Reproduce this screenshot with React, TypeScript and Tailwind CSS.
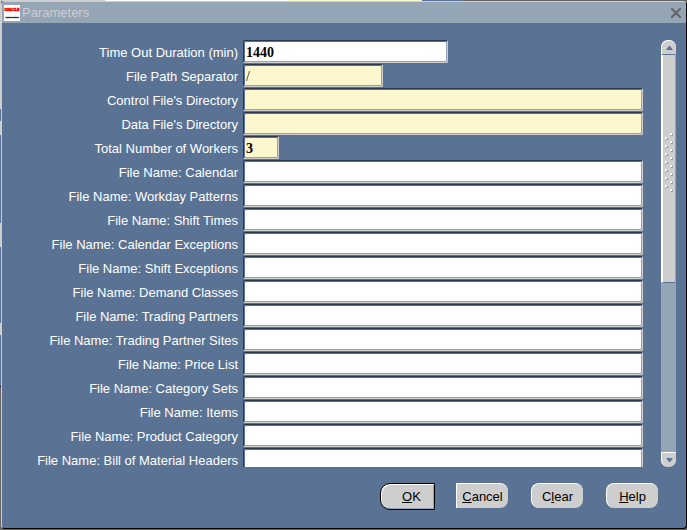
const fields = [
  { label: "Time Out Duration (min)", value: "1440", width: "w-[205px]", bg: "bg-white", text: "font-bold" },
  { label: "File Path Separator", value: "/", width: "w-[140px]", bg: "bg-[#fff7ce]", text: "font-normal" },
  { label: "Control File's Directory", value: "", width: "w-full", bg: "bg-[#fff7ce]", text: "font-bold" },
  { label: "Data File's Directory", value: "", width: "w-full", bg: "bg-[#fff7ce]", text: "font-bold" },
  { label: "Total Number of Workers", value: "3", width: "w-9", bg: "bg-[#fff7ce]", text: "font-bold" },
  ...[
    "Calendar",
    "Workday Patterns",
    "Shift Times",
    "Calendar Exceptions",
    "Shift Exceptions",
    "Demand Classes",
    "Trading Partners",
    "Trading Partner Sites",
    "Price List",
    "Category Sets",
    "Items",
    "Product Category",
    "Bill of Material Headers",
  ].map((name) => ({
    label: `File Name: ${name}`,
    value: "",
    width: "w-full",
    bg: "bg-white",
    text: "font-bold",
  })),
];

// Slivers of the form behind the dialog, along its left edge
const leftEdge = [
  "h-[108px] bg-[#cecece]",
  "h-3 bg-[#5a7394]",
  "h-[14px] bg-[#cecece]",
  "h-[88px] bg-[#5a7394]",
  "h-6 bg-[#cecece]",
  "h-[76px] bg-[#5a7394]",
  "h-3 bg-[#cecece]",
  "h-[51px] bg-[#5a7394]",
  "h-px bg-black",
  "flex-1 bg-[#6b6363]",
];

function OracleLogo() {
  return (
    <svg width="16" height="16" viewBox="0 0 32 32" aria-hidden="true" fontFamily="Liberation Sans, sans-serif">
      <rect width="32" height="32" fill="#fff" />
      <text x="16" y="12" fontSize="7" fontWeight="bold" fill="#f00" stroke="#f00" strokeWidth="1" textAnchor="middle">
        ORACLE
      </text>
      <text x="16" y="25" fontSize="5" fill="#000" stroke="#000" strokeWidth="0.6" textAnchor="middle">
        Applications
      </text>
    </svg>
  );
}

function TitleBar() {
  return (
    <header className="flex h-[21px] shrink-0 items-center bg-[#94a5b5] pr-[5px] pl-0.5">
      <OracleLogo />
      <h1 className="ml-0.5 flex-1 text-[13px] leading-5 text-[#cecece]">Parameters</h1>
      <button type="button" aria-label="Close" className="text-[#636363]">
        <svg width="10" height="10" viewBox="0 0 10 10">
          <path d="M1 1l8 8M9 1L1 9" stroke="currentColor" strokeWidth="2" strokeLinecap="square" />
        </svg>
      </button>
    </header>
  );
}

function Scrollbar() {
  return (
    <div aria-hidden="true" className="flex w-[15px] shrink-0 flex-col rounded-t-[7px] rounded-b-[7px] bg-[#94a5b5]">
      <div className="flex h-[14px] items-center justify-center rounded-t-[7px] border-t border-l border-white bg-[#cecece]">
        <svg width="7" height="4" viewBox="0 0 7 4" fill="#5a7394">
          <path d="M0 4L3 0h1l3 4z" />
        </svg>
      </div>
      <div className="mr-px flex h-[229px] justify-center border-t border-b border-l-2 border-t-[#5a7394] border-b-[#5a7394] border-l-white bg-[#cecece]">
        <svg width="9" height="64" viewBox="0 0 9 64" className="mt-[78px]" shapeRendering="crispEdges">
          {[5, 13, 21, 29, 37, 45, 53].map((y) => (
            <g key={y}>
              <rect x="1" y={y} width="2" height="2" fill="#94a5b5" />
              <rect x="0" y={y - 1} width="2" height="2" fill="#fff" />
            </g>
          ))}
          {[1, 9, 17, 25, 33, 41, 49, 57].map((y) => (
            <g key={y}>
              <rect x="6" y={y} width="2" height="2" fill="#94a5b5" />
              <rect x="5" y={y - 1} width="2" height="2" fill="#fff" />
            </g>
          ))}
        </svg>
      </div>
      <div className="flex-1" />
      <div className="flex h-[15px] items-center justify-center rounded-b-[7px] border-t border-l border-white bg-[#cecece]">
        <svg width="7" height="4" viewBox="0 0 7 4" fill="#5a7394">
          <path d="M0 0h7L4 4H3z" />
        </svg>
      </div>
    </div>
  );
}

const raised = "h-[25px] w-[52px] border-t border-l border-white bg-[#cecece] pt-0.5";

export default function App() {
  return (
    <div className="flex h-screen flex-col bg-[#6b6363] font-['Liberation_Sans',sans-serif] text-[13px]">
      <div className="flex h-px shrink-0">
        <div className="w-[105px] bg-[#cecece]" />
        <div className="w-[183px] bg-white" />
        <div className="w-[134px] bg-[#fff7ce]" />
        <div className="w-10 bg-[#5a7394]" />
      </div>
      <div className="flex min-h-0 flex-1">
        <div className="flex w-px flex-col">
          {leftEdge.map((segment, i) => (
            <div key={i} className={segment} />
          ))}
        </div>
        <main className="mb-px flex min-w-0 flex-1 flex-col rounded-sm border border-t-[#cecece] border-r-black border-b-black border-l-[#cecece] bg-[#5a7394]">
          <TitleBar />
          <div className="mt-[17px] flex min-h-0 flex-1 pr-[10px]">
            <div className="min-w-0 flex-1 overflow-y-auto pr-[18px] [scrollbar-width:none]">
              {fields.map((field, i) => (
                <div key={field.label} className="flex h-6 items-start">
                  <label htmlFor={`field-${i}`} className="w-[236px] shrink-0 pt-px text-right leading-6 text-white">
                    {field.label}
                  </label>
                  <div className="ml-[5px] flex-1">
                    <input
                      id={`field-${i}`}
                      type="text"
                      defaultValue={field.value}
                      className={`block h-[23px] rounded-xs border border-t-[#293952] border-r-[#cecece] border-b-[#cecece] border-l-[#293952] px-0.5 pt-0.5 font-['Liberation_Serif',serif] text-sm text-black shadow-[inset_-1px_-1px_0_#94a5b5,inset_1px_1px_0_#5a7394] outline-none ${field.width} ${field.bg} ${field.text}`}
                    />
                  </div>
                </div>
              ))}
            </div>
            <Scrollbar />
          </div>
          <footer className="flex h-[61px] shrink-0 items-start justify-end gap-[23px] pt-4 pr-7">
            <button
              type="button"
              className="-mr-0.5 h-[27px] w-[55px] rounded-l-[10px] border border-black bg-[#cecece] pt-px pl-2 shadow-[inset_1px_1px_0_#fff,inset_-1px_-1px_0_#94a5b5]"
            >
              <u>O</u>K
            </button>
            <button type="button" className={`${raised} rounded-r-lg`}>
              <u>C</u>ancel
            </button>
            <button type="button" className={`${raised} rounded-lg`}>
              C<u>l</u>ear
            </button>
            <button type="button" className={`${raised} rounded-lg`}>
              <u>H</u>elp
            </button>
          </footer>
        </main>
      </div>
    </div>
  );
}
